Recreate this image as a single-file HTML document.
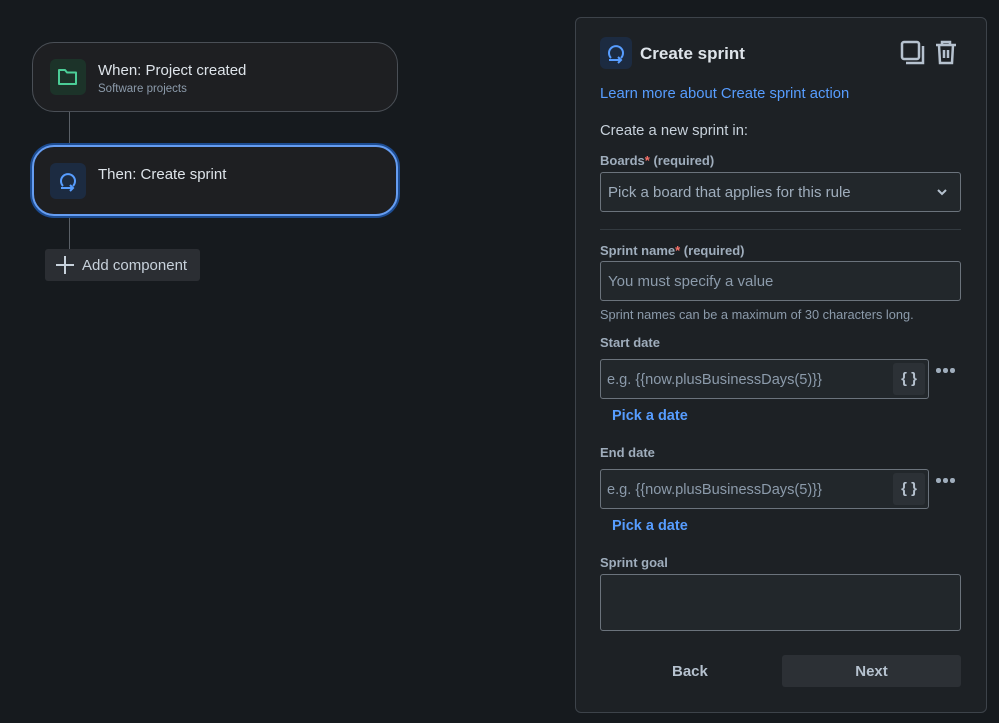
<!DOCTYPE html>
<html><head><meta charset="utf-8"><style>
*{box-sizing:border-box;margin:0;padding:0}
body{width:999px;height:723px;background:#161a1e;font-family:"Liberation Sans",sans-serif;position:relative;overflow:hidden;color:#c7d1db}
.a{position:absolute}
.card{position:absolute;left:32px;width:366px;height:70px;border-radius:22px;background:#1e1f22;border:1px solid #4a4f56}
.ib{position:absolute;width:36px;height:36px;border-radius:6px}
.lbl{position:absolute;left:600px;font-size:13px;font-weight:bold;color:#9fadbc}
.lbl b{color:#f87168}
.inp{position:absolute;left:600px;width:361px;height:40px;border:1px solid #6b737c;border-radius:3px;background:#22272b;font-size:15px;color:#8c9bab;padding-left:7px;line-height:40px}
.blue{color:#579dff}
.dots{position:absolute;left:936px;width:20px;height:5px}
.dots i{position:absolute;top:0;width:4.5px;height:4.5px;border-radius:50%;background:#9fadbc}
.br{position:absolute;left:893px;width:32px;height:32px;background:#2c3136;border-radius:3px;color:#b6c2cf;font-weight:bold;font-size:15px;text-align:center;line-height:31px}
</style></head><body>
<div class="a" style="left:69px;top:112px;width:1px;height:33px;background:#5a6067"></div>
<div class="a" style="left:69px;top:216px;width:1px;height:33px;background:#5a6067"></div>
<div class="card" style="top:42px">
 <div class="ib" style="left:17px;top:16px;background:#1c3329"></div>
 <svg class="a" style="left:24px;top:24px" width="22" height="20" viewBox="0 0 22 20"><path d="M2 3h6l2 2.5h9v11.5H2z" fill="none" stroke="#4bce97" stroke-width="2" stroke-linejoin="round"/></svg>
 <div class="a" style="left:65px;top:19px;font-size:15px;color:#dee4ea">When: Project created</div>
 <div class="a" style="left:65px;top:40px;font-size:11.5px;color:#8c9bab">Software projects</div>
</div>
<div class="card" style="top:145px;height:71px;border:2px solid #669df1;box-shadow:0 0 0 2px #1d4c91">
 <div class="ib" style="left:16px;top:16px;background:#1c2b41"></div>
 <svg class="a" style="left:23px;top:23px" width="22" height="22" viewBox="0 0 22 22"><path d="M6 16A7 7 0 1 1 16 16" fill="none" stroke="#579dff" stroke-width="2"/><path d="M4 18h12M13 15l3 3-3 3" fill="none" stroke="#579dff" stroke-width="2"/></svg>
 <div class="a" style="left:64px;top:19px;font-size:15px;color:#dee4ea">Then: Create sprint</div>
</div>
<div class="a" style="left:45px;top:249px;width:155px;height:32px;background:#2b2e33;border-radius:3px">
 <div class="a" style="left:11px;top:7px;width:18px;height:18px"><div class="a" style="left:8px;top:0;width:2px;height:18px;background:#c7d1db"></div><div class="a" style="left:0;top:8px;width:18px;height:2px;background:#c7d1db"></div></div>
 <div class="a" style="left:37px;top:8px;font-size:15px;color:#c7d1db">Add component</div>
</div>

<div class="a" style="left:575px;top:17px;width:412px;height:696px;background:#1d2125;border:1px solid #3d434a;border-radius:6px"></div>
<div class="ib" style="left:600px;top:37px;width:32px;height:32px;background:#1c2b41"></div>
<svg class="a" style="left:605px;top:42px" width="22" height="22" viewBox="0 0 22 22"><path d="M6 16A7 7 0 1 1 16 16" fill="none" stroke="#579dff" stroke-width="2"/><path d="M4 18h12M13 15l3 3-3 3" fill="none" stroke="#579dff" stroke-width="2"/></svg>
<div class="a" style="left:640px;top:44px;font-size:17px;font-weight:bold;color:#dee4ea">Create sprint</div>
<svg class="a" style="left:900px;top:40px" width="26" height="26" viewBox="0 0 26 26"><rect x="2" y="2" width="17" height="17" rx="2" fill="none" stroke="#b6c2cf" stroke-width="2.5"/><path d="M23 6v17H6" fill="none" stroke="#b6c2cf" stroke-width="2.5"/></svg>
<svg class="a" style="left:934px;top:39px" width="24" height="26" viewBox="0 0 24 26"><path d="M2 6h20M8 6V3h8v3M5 6l1 18h12l1-18M10 11v8M14 11v8" fill="none" stroke="#b6c2cf" stroke-width="2.5"/></svg>
<div class="a blue" style="left:600px;top:86px;font-size:14.8px">Learn more about Create sprint action</div>
<div class="a" style="left:600px;top:123px;font-size:14.8px;color:#c7d1db">Create a new sprint in:</div>
<div class="lbl" style="top:153px">Boards<b>*</b> (required)</div>
<div class="inp" style="top:172px;color:#9fadbc">Pick a board that applies for this rule<svg class="a" style="left:335px;top:15px" width="12" height="8" viewBox="0 0 12 8"><path d="M2 2l4 4 4-4" fill="none" stroke="#b6c2cf" stroke-width="2"/></svg></div>
<div class="a" style="left:600px;top:229px;width:361px;height:1px;background:#333a40"></div>
<div class="lbl" style="top:243px">Sprint name<b>*</b> (required)</div>
<div class="inp" style="top:261px">You must specify a value</div>
<div class="a" style="left:600px;top:307px;font-size:12.8px;color:#8c9bab">Sprint names can be a maximum of 30 characters long.</div>
<div class="lbl" style="top:335px">Start date</div>
<div class="inp" style="top:359px;width:329px;font-size:14.6px;padding-left:6px">e.g. {{now.plusBusinessDays(5)}}</div>
<div class="br" style="top:363px">{ }</div>
<div class="dots" style="top:368px"><i style="left:0"></i><i style="left:7px"></i><i style="left:14px"></i></div>
<div class="a blue" style="left:612px;top:408px;font-size:14.5px;font-weight:bold">Pick a date</div>
<div class="lbl" style="top:445px">End date</div>
<div class="inp" style="top:469px;width:329px;font-size:14.6px;padding-left:6px">e.g. {{now.plusBusinessDays(5)}}</div>
<div class="br" style="top:473px">{ }</div>
<div class="dots" style="top:478px"><i style="left:0"></i><i style="left:7px"></i><i style="left:14px"></i></div>
<div class="a blue" style="left:612px;top:518px;font-size:14.5px;font-weight:bold">Pick a date</div>
<div class="lbl" style="top:555px">Sprint goal</div>
<div class="inp" style="top:574px;height:57px"></div>
<div class="a" style="left:672px;top:663px;font-size:15px;font-weight:bold;color:#b6c2cf">Back</div>
<div class="a" style="left:782px;top:655px;width:179px;height:32px;background:#2c3035;border-radius:3px;text-align:center;line-height:33px;font-size:15px;font-weight:bold;color:#b6c2cf">Next</div>
</body></html>
